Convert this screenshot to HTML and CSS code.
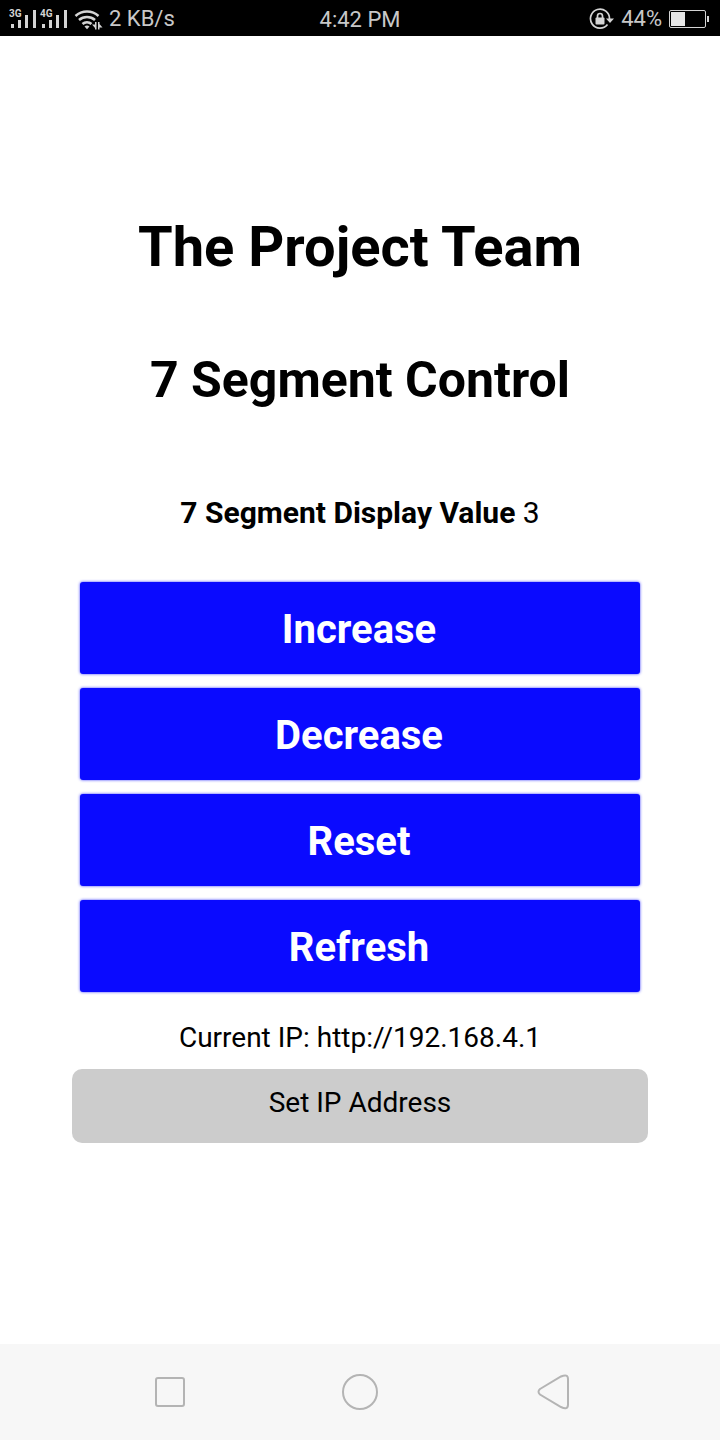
FILE: index.html
```html
<!DOCTYPE html>
<html lang="en">
<head>
<meta charset="utf-8">
<meta name="viewport" content="width=device-width, initial-scale=1">
<title>7 Segment Control</title>
<link rel="stylesheet" href="styles.css">
</head>
<body>
<header class="status">
  <div class="status-side">
    <svg class="network" width="95" height="24" viewBox="0 0 95 24" aria-hidden="true">
      <g fill="#d4d4d4">
        <path d="M3 17h3v4h-3zM10 13h3v8h-3zM17 8h3v13h-3zM25 3h3v18h-3z"/>
        <path d="M34 17h3v4h-3zM41 13h3v8h-3zM48 8h3v13h-3zM56 3h3v18h-3z"/>
        <path d="M76.500 19.500q2.500-2 5 0l-2.500 2.700z"/>
        <path d="M88.500 15v7.500h-1.500v-1.500l-3-3.500h3v-2.500zM90 22.500v-7.500h1.500v2l3 3.500h-3v2z"/>
      </g>
      <g fill="none" stroke="#d4d4d4" stroke-width="2.500">
        <path d="M67.500 9c6.500-6 16.500-6 23 0M71 13c4.500-4 11.500-4 16 0M74.500 17c2.500-2.500 6.500-2.500 9 0"/>
      </g>
      <text class="network-label" x="1" y="10">3G</text>
      <text class="network-label" x="32" y="10">4G</text>
    </svg>
    <span>2 KB/s</span>
  </div>
  <time class="clock">4:42 PM</time>
  <div class="status-side status-end">
    <svg width="26" height="24" viewBox="0 0 26 24" aria-hidden="true">
      <path d="M18.500 17.500A9.500 9.500 0 1 1 20.500 12" fill="none" stroke="#d4d4d4" stroke-width="1.700"/>
      <path d="M17 11.500h8l-4 4.500z" fill="#d4d4d4"/>
      <rect x="6.500" y="10.500" width="9" height="7" rx="1" fill="#d4d4d4"/>
      <path d="M8.500 11v-2a2.500 2.500 0 0 1 5 0v2" fill="none" stroke="#d4d4d4" stroke-width="1.700"/>
    </svg>
    <span>44%</span>
    <svg width="42" height="20" viewBox="0 0 42 20" aria-hidden="true">
      <rect x="1.500" y="1.500" width="36" height="17" rx="1.500" fill="none" stroke="#d4d4d4"/>
      <rect x="3" y="3" width="14" height="14" fill="#e6e6e6"/>
      <rect x="39" y="7" width="2" height="6" fill="#d4d4d4"/>
    </svg>
  </div>
</header>
<main class="screen">
  <h1 class="title">The Project Team</h1>
  <h2 class="subtitle">7 Segment Control</h2>
  <p class="value"><strong>7 Segment Display Value</strong> 3</p>
  <div class="actions">
    <button class="action" type="button">Increase</button>
    <button class="action" type="button">Decrease</button>
    <button class="action" type="button">Reset</button>
    <button class="action" type="button">Refresh</button>
  </div>
  <p class="address">Current IP: http://192.168.4.1</p>
  <button class="set-address" type="button">Set IP Address</button>
</main>
<nav class="system-nav" aria-label="System">
  <button class="nav-button" type="button" aria-label="Recent apps">
    <svg width="40" height="40" viewBox="0 0 40 40"><rect x="8" y="6" width="28" height="28" rx="2"/></svg>
  </button>
  <button class="nav-button" type="button" aria-label="Home">
    <svg width="40" height="40" viewBox="0 0 40 40"><circle cx="20" cy="20" r="17"/></svg>
  </button>
  <button class="nav-button" type="button" aria-label="Back">
    <svg width="40" height="40" viewBox="0 0 40 40"><path d="M8 17L29 4.500Q36 1.500 36 7V32.500Q36 38.500 29 35L8 22.500Q5 19.750 8 17Z"/></svg>
  </button>
</nav>
</body>
</html>
```
FILE: styles.css
```css
* {
  box-sizing: border-box;
}

body {
  margin: 0;
  min-height: 100vh;
  display: flex;
  flex-direction: column;
  background: #fff;
  color: #000;
  font-family: Roboto, "Liberation Sans", sans-serif;
  font-size: 28px;
  line-height: 40px;
}

button {
  border: 0;
  font-family: inherit;
  cursor: pointer;
}

.status {
  height: 36px;
  padding: 0 10px 0 8px;
  display: grid;
  grid-template-columns: 1fr auto 1fr;
  align-items: center;
  background: #000;
  color: #c8c8c8;
  font-size: 22px;
  line-height: 36px;
}

.status-side {
  display: flex;
  align-items: center;
  gap: 6px;
}

.status-end {
  justify-content: flex-end;
}

.clock {
  padding: 2px 0 0 2px;
}

.network-label {
  fill: #d4d4d4;
  font-size: 10px;
  font-weight: 700;
}

.screen {
  flex: 1;
  padding: 179px 10% 0;
  display: flex;
  flex-direction: column;
  text-align: center;
}

.title,
.subtitle,
.value,
.address {
  margin: 0;
}

.title {
  font-size: 56px;
  line-height: 64px;
}

.subtitle {
  margin-top: 69px;
  font-size: 50px;
  line-height: 64px;
}

.value {
  margin-top: 81px;
  font-size: 30px;
}

.actions {
  margin-top: 49px;
  padding: 0 8px;
  display: flex;
  flex-direction: column;
  gap: 14px;
}

.action {
  height: 92px;
  padding: 2px 2px 0 0;
  border-radius: 3px;
  background: #0a0aff;
  box-shadow: 0 0 3px rgb(10 10 255 / 80%);
  color: #fff;
  font-size: 40px;
  font-weight: 700;
}

.address {
  margin-top: 26px;
}

.set-address {
  height: 74px;
  margin-top: 11px;
  padding: 0 0 8px;
  border-radius: 10px;
  background: #ccc;
  color: #000;
  font-size: 28px;
}

.system-nav {
  height: 96px;
  padding: 0 10%;
  display: grid;
  grid-template-columns: repeat(3, 1fr);
  align-items: center;
  background: #f7f7f7;
}

.nav-button {
  height: 96px;
  padding: 0;
  display: flex;
  align-items: center;
  justify-content: center;
  background: none;
}

.nav-button svg {
  fill: none;
  stroke: #b4b4b4;
  stroke-width: 2;
}
```
